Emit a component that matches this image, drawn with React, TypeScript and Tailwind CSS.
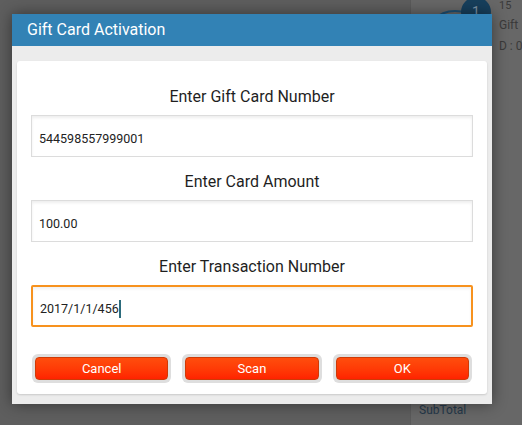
import React from 'react';

const fields = [
  { label: 'Enter Gift Card Number', value: '544598557999001' },
  { label: 'Enter Card Amount', value: '100.00' },
  { label: 'Enter Transaction Number', value: '2017/1/1/456', active: true },
];

const buttons = ['Cancel', 'Scan', 'OK'];

const App: React.FC = () => {
  return (
    <div
      className="relative w-[522px] h-[425px] overflow-hidden flex bg-[#5e5e5e]"
      style={{ fontFamily: 'Roboto, "Noto Sans", sans-serif' }}
    >
      {/* page behind the overlay */}
      <div className="flex-1" />
      <div className="relative w-[112px] h-full bg-[#676767] border-l border-[#5a5a5a]">
        <div className="absolute left-[12px] top-[10px] w-[64px] h-[64px] rounded-full border-2 border-[#1d4f73]" />
        <div className="absolute left-[50px] top-[-3px] w-[30px] h-[30px] rounded-full bg-[#173f5c] flex items-center justify-center text-[14px] text-[#7d93a6]">
          1
        </div>
        <div className="absolute left-[88px] top-0 flex flex-col text-[#3a3a3a] whitespace-nowrap">
          <span className="text-[11px] leading-[12px]">15</span>
          <span className="text-[12px] leading-[14px] mt-[6px]">Gift</span>
          <span className="text-[12px] leading-[14px] mt-[7px]">D : 0</span>
        </div>
        <div className="absolute left-[8px] top-[401px] text-[12px] text-[#25384a]">SubTotal</div>
      </div>

      {/* dialog */}
      <div className="absolute left-[12px] top-[14px] w-[480px] flex flex-col bg-[#ececec] shadow-[0_0_14px_rgba(0,0,0,0.45)]">
        <div className="h-[32px] bg-[#3282b5] flex items-center px-[15px]">
          <span className="text-white text-[16px]">Gift Card Activation</span>
        </div>
        <div className="px-[5px] pt-[15px] pb-[10px]">
          <div className="bg-white rounded-[3px] shadow-[0_1px_2px_rgba(0,0,0,0.15)] px-[14px] pt-[26px] pb-[11px] flex flex-col">
            {fields.map((f, i) => (
              <div key={f.label} className={i === 0 ? 'flex flex-col' : 'flex flex-col mt-[15px]'}>
                <div className="h-[20px] leading-[20px] text-center text-[16px] text-[#1f1f1f] mb-[8px]">{f.label}</div>
                <div
                  className={
                    f.active
                      ? 'h-[42px] flex items-center pt-[6px] px-[7px] border-2 border-[#f7921e] rounded-[2px] shadow-[inset_0_2px_3px_rgba(0,0,0,0.06)]'
                      : 'h-[42px] flex items-center pt-[7px] px-[7px] border border-[#dcdcdc] shadow-[inset_0_2px_3px_rgba(0,0,0,0.07)]'
                  }
                >
                  <span className="text-[12.5px] text-[#222]">{f.value}</span>
                  {f.active && <span className="w-[2px] h-[18px] bg-[#2c6b7c]" />}
                </div>
              </div>
            ))}
            <div className="mt-[27px] grid grid-cols-3 gap-[11px] px-[1px]">
              {buttons.map((b) => (
                <div key={b} className="p-[3px] rounded-[6px] bg-[#dedede]">
                  <div className="h-[23px] rounded-[4px] border border-[#cf3a06] bg-gradient-to-b from-[#ff4d0d] to-[#ff2200] flex items-center justify-center text-white text-[13px]">
                    {b}
                  </div>
                </div>
              ))}
            </div>
          </div>
        </div>
      </div>
    </div>
  );
};

export default App;
